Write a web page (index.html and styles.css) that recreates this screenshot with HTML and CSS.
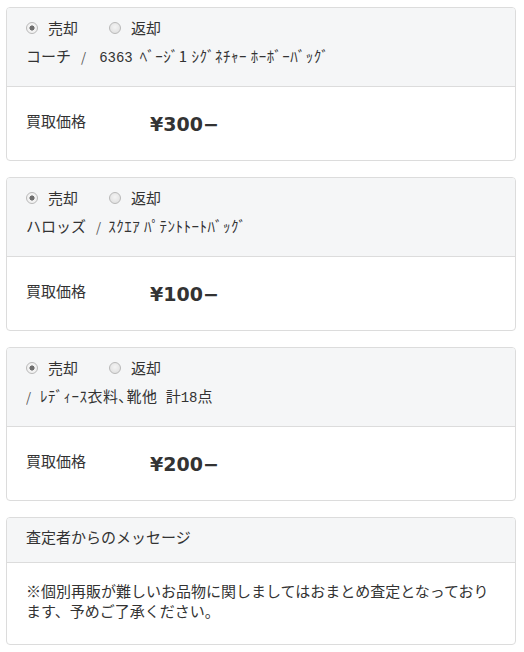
FILE: index.html
```html
<!DOCTYPE html>
<html lang="ja">
<head>
<meta charset="utf-8">
<link rel="stylesheet" href="styles.css">
</head>
<body>
<div class="list">
  <section class="card">
    <div class="card-head">
      <div class="radios">
        <span class="radio checked"></span><span class="rlabel">売却</span>
        <span class="radio"></span><span class="rlabel">返却</span>
      </div>
      <div class="item">コーチ<span class="sep sep-wide">/</span><span class="mono mono-gap">6363</span><span class="kana">ﾍﾞｰｼﾞ1 ｼｸﾞﾈﾁｬｰ ﾎｰﾎﾞｰﾊﾞｯｸﾞ</span></div>
    </div>
    <div class="card-body price-row">
      <span class="plabel">買取価格</span>
      <span class="price">¥300−</span>
    </div>
  </section>
  <section class="card">
    <div class="card-head">
      <div class="radios">
        <span class="radio checked"></span><span class="rlabel">売却</span>
        <span class="radio"></span><span class="rlabel">返却</span>
      </div>
      <div class="item">ハロッズ<span class="sep">/</span><span class="kana">ｽｸｴｱ ﾊﾟﾃﾝﾄﾄｰﾄﾊﾞｯｸﾞ</span></div>
    </div>
    <div class="card-body price-row">
      <span class="plabel">買取価格</span>
      <span class="price">¥100−</span>
    </div>
  </section>
  <section class="card">
    <div class="card-head">
      <div class="radios">
        <span class="radio checked"></span><span class="rlabel">売却</span>
        <span class="radio"></span><span class="rlabel">返却</span>
      </div>
      <div class="item"><span class="sep sep-first">/</span><span class="kana">ﾚﾃﾞｨｰｽ衣料､靴他</span><span class="gap">計</span><span class="mono">18</span>点</div>
    </div>
    <div class="card-body price-row">
      <span class="plabel">買取価格</span>
      <span class="price">¥200−</span>
    </div>
  </section>
  <section class="card">
    <div class="card-head msg-head">査定者からのメッセージ</div>
    <div class="card-body msg-body">※個別再販が難しいお品物に関しましてはおまとめ査定となっております、予めご了承ください。</div>
  </section>
</div>
</body>
</html>
```

FILE: styles.css
```css
html, body {
  margin: 0;
  padding: 0;
  background: #ffffff;
}
body {
  font-family: "Noto Sans CJK JP", "Noto Sans", sans-serif;
  color: #333333;
  font-size: 15px;
}
.list {
  padding: 7px 8px 0 6px;
  display: flex;
  flex-direction: column;
  gap: 16px;
}
.card {
  border: 1px solid #dcdcdc;
  border-radius: 4px;
  background: #fff;
  overflow: hidden;
}
.card-head {
  background: #f5f6f7;
  border-bottom: 1px solid #dcdcdc;
  padding: 6px 19px 16px;
  line-height: 28px;
}
.radios {
  display: flex;
  align-items: center;
  height: 28px;
}
.radio {
  box-sizing: border-box;
  width: 12px;
  height: 12px;
  border-radius: 50%;
  border: 1px solid #b9b9b9;
  background: radial-gradient(circle at 50% 40%, #f4f4f4, #dcdcdc);
  margin-right: 10px;
}
.radio.checked {
  background: radial-gradient(circle, #6e6e6e 0 2.3px, #f2f2f2 2.8px);
}
.rlabel {
  margin-right: 31px;
}
.item {
  white-space: nowrap;
  height: 28px;
  overflow: hidden;
}
.kana {
  letter-spacing: 0.5px;
}
.gap {
  margin-left: 8px;
}
.sep {
  display: inline-block;
  font-size: 13px;
  color: #555;
  margin: 0 7px 0 10px;
}
.sep-wide {
  margin: 0 13px 0 10px;
}
.sep-first {
  margin: 0 9px 0 0;
}
.mono {
  font-family: "Liberation Mono", monospace;
  font-size: 14px;
  line-height: 20px;
}
.mono-gap {
  margin-right: 7px;
}
.price-row {
  display: flex;
  align-items: flex-start;
  padding: 21px 19px 20px;
  height: 32px;
}
.plabel {
  width: 124px;
  line-height: 26px;
}
.price {
  font-family: "DejaVu Sans", sans-serif;
  font-weight: bold;
  font-size: 19px;
  line-height: 32px;
  color: #333;
}
.msg-head {
  padding: 8px 19px 14px;
  line-height: 22px;
}
.msg-body {
  padding: 18px 19px 23px;
  line-height: 20px;
}
```
